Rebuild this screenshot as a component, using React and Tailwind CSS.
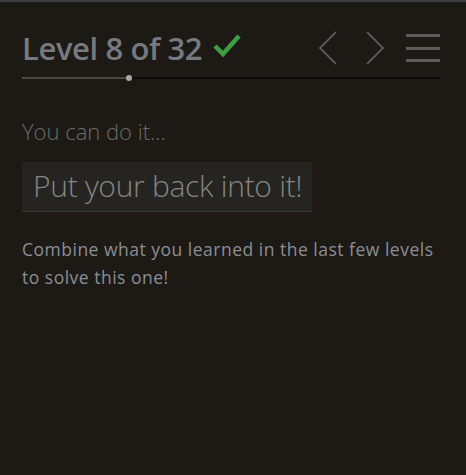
export default function App() {
  return (
    <div className="w-[466px] h-[475px] bg-[#1d1a16] border-t-2 border-[#3b3e45] overflow-hidden" style={{ fontFamily: '"Open Sans", sans-serif' }}>
      <div className="pl-[22px] pr-[26px] pt-[24px]">
        <div className="flex items-center justify-between h-[44px]">
          <div className="flex items-center gap-[11px]">
            <h1 className="text-[31px] font-semibold text-[#767a80] leading-none tracking-[-0.4px]">Level 8 of 32</h1>
            <svg width="28" height="24" viewBox="0 0 28 24" className="mt-[-4px]">
              <path d="M2 12 L10 20 L26 2" fill="none" stroke="#3f9e44" strokeWidth="4.5" />
            </svg>
          </div>
          <div className="flex items-center">
            <svg width="20" height="34" viewBox="0 0 20 34" className="mr-[27px]">
              <path d="M18 1 L2 17 L18 33" fill="none" stroke="#5a5a5a" strokeWidth="1.8" />
            </svg>
            <svg width="20" height="34" viewBox="0 0 20 34" className="mr-[21px]">
              <path d="M2 1 L18 17 L2 33" fill="none" stroke="#5a5a5a" strokeWidth="1.8" />
            </svg>
            <div className="flex flex-col gap-[9.5px] w-[34px]">
              <div className="h-[3px] bg-[#5c5c5c]" />
              <div className="h-[3px] bg-[#5c5c5c]" />
              <div className="h-[3px] bg-[#5c5c5c]" />
            </div>
          </div>
        </div>
        <div className="relative mt-[7px] flex h-[2px]">
          <div className="w-[107px] bg-[#4a4845]" />
          <div className="flex-1 bg-[#0d0c0a]" />
          <div className="absolute left-[104px] top-[-2px] w-[6px] h-[6px] rounded-full bg-[#a9a9a9]" />
        </div>
        <p className="mt-[41px] text-[22px] font-light text-[#6a6a6a] leading-none">You can do it...</p>
        <div className="mt-[20px] inline-block bg-[#262420] border-b border-[#3a3834] pl-[11px] pr-[10px] h-[50px]">
          <span className="text-[30px] font-light text-[#858585] leading-[48px] tracking-[-0.3px]">Put your back into it!</span>
        </div>
        <p className="mt-[23px] text-[17.5px] text-[#8a8e95] leading-[28px] tracking-[0.5px]">Combine what you learned in the last few levels to solve this one!</p>
      </div>
    </div>
  );
}
